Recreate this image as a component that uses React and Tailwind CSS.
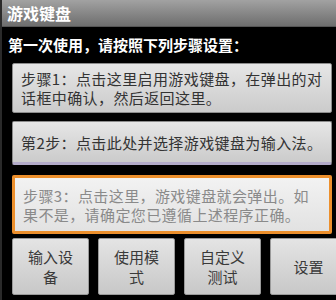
import React from 'react';

const font = { fontFamily: '"Noto Sans CJK SC", "Noto Sans", sans-serif' };

function StepButton({ children, className = '', textClass = 'text-[#333]' }) {
  return (
    <div className={`flex items-center pl-[8px] pr-[2px] rounded-[2px] ${className}`}>
      <div className={`text-[15px] leading-[19px] tracking-[0.4px] whitespace-nowrap ${textClass}`}>{children}</div>
    </div>
  );
}

function SmallButton({ children }) {
  return (
    <div className="w-[77px] h-[57px] shrink-0 flex items-center justify-center text-center rounded-[2px] bg-gradient-to-b from-[#e4e4e4] to-[#c8c8c8] border border-[#9a9a9a]">
      <div className="text-[15px] leading-[20px] text-[#3a3a3a]">{children}</div>
    </div>
  );
}

export default function App() {
  return (
    <div className="w-[336px] h-[300px] bg-black overflow-hidden border-l-[2px] border-[#2a2a2a]" style={font}>
      <div className="h-[27px] flex items-center pl-[5px] bg-gradient-to-b from-[#a2a2a2] to-[#6e6e6e] border-b border-[#555]">
        <span className="text-white text-[16px] font-bold">游戏键盘</span>
      </div>
      <div className="h-[36px] flex items-center pl-[6px]">
        <span className="text-white text-[15px] font-bold">第一次使用，请按照下列步骤设置：</span>
      </div>
      <div className="pl-[10px] pr-[4px] flex flex-col">
        <StepButton className="h-[50px] bg-gradient-to-b from-[#e6e6e6] to-[#cbcbcb] border border-[#8c8c8c]">
          步骤1：点击这里启用游戏键盘，在弹出的对<br />话框中确认，然后返回这里。
        </StepButton>
        <StepButton className="h-[44px] mt-[8px] bg-gradient-to-b from-[#e6e6e6] to-[#cbcbcb] border border-[#8c8c8c] border-b-[3px] border-b-[#b3abc9]">
          第2步：点击此处并选择游戏键盘为输入法。
        </StepButton>
        <StepButton
          className="h-[59px] mt-[10px] bg-gradient-to-b from-[#f2f2f2] to-[#e2e2e2] border-[3px] border-[#ec8f2c]"
          textClass="text-[#8a8a8a]"
        >
          步骤3：点击这里，游戏键盘就会弹出。如<br />果不是，请确定您已遵循上述程序正确。
        </StepButton>
        <div className="flex gap-[9px] mt-[4px]">
          <SmallButton>输入设<br />备</SmallButton>
          <SmallButton>使用模<br />式</SmallButton>
          <SmallButton>自定义<br />测试</SmallButton>
          <SmallButton>设置</SmallButton>
        </div>
      </div>
    </div>
  );
}
